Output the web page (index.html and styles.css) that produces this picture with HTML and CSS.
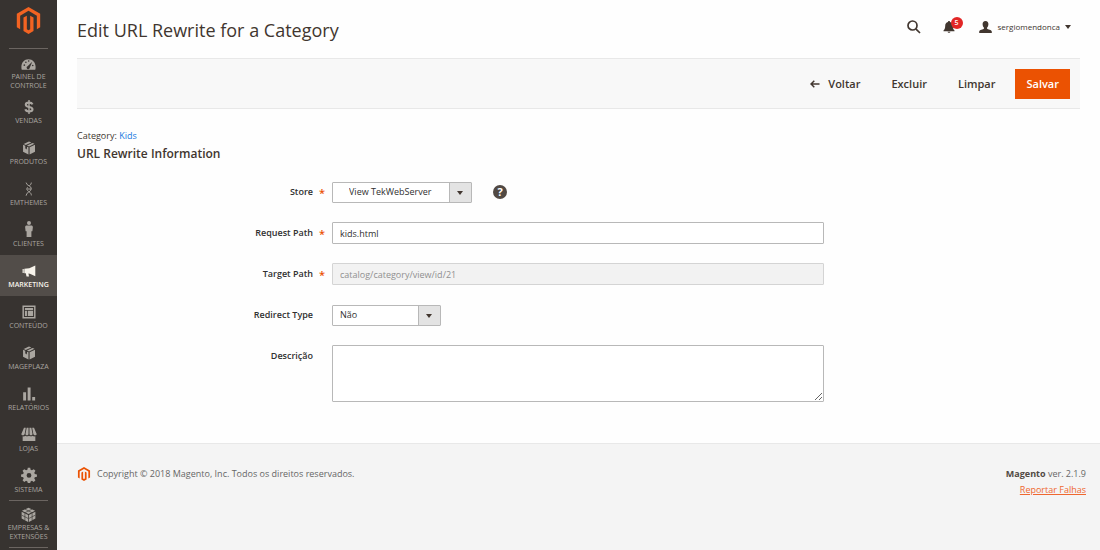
FILE: index.html
```html
<!DOCTYPE html>
<html lang="pt-BR">
<head>
<meta charset="utf-8">
<title>Edit URL Rewrite for a Category</title>
<link rel="stylesheet" href="styles.css">
</head>
<body>
<svg class="defs" aria-hidden="true">
  <symbol id="magento" viewBox="0 0 24 24"><path d="M12 24l-4.455-2.572v-12l2.97-1.715v12.001l1.485.902 1.485-.902V7.713l2.971 1.715v12L12 24zM22.391 6.003v12l-2.969 1.714V7.713L12 3.43 4.574 7.713v12.004l-2.970-1.714V6.003L12 0l10.391 6.003z"/></symbol>
  <symbol id="box" viewBox="0 0 24 24"><path d="M12 .8l4 1.600-9.600 4.300-3.600-1.600zM18 3.300l3.400 1.500-9.300 4.500-3.600-1.600zM1.800 6.600l3.800 1.700v5l1.600-.6 1.400 2.400V9.700l2.500 1.100V23L1.800 18.600zM22.300 6.600v12L13 23V10.800z"/></symbol>
</svg>
<div class="page">
  <aside class="sidebar">
    <a class="logo" href="#" aria-label="Magento Admin"><svg><use href="#magento"/></svg></a>
    <nav class="menu">
      <a class="item item-first" href="#">
        <svg viewBox="0 0 24 24"><path fill-rule="evenodd" d="M1.200 20.500C-1.200 11 4 3.500 12 3.500S25.200 11 22.800 20.500zM4 13a1.300 1.300 0 1 0 2.600 0a1.300 1.300 0 1 0-2.600 0zM6.500 8.300a1.300 1.300 0 1 0 2.600 0a1.300 1.300 0 1 0-2.600 0zM11 6.300a1.300 1.300 0 1 0 2.600 0a1.300 1.300 0 1 0-2.600 0zM17.500 13.500a1.300 1.300 0 1 0 2.600 0a1.300 1.300 0 1 0-2.600 0zM18 7.500l-7.500 7.300a2.500 2.500 0 1 0 3.500 2.500z"/></svg>
        <span>PAINEL DE CONTROLE</span></a>
      <a class="item" href="#">
        <svg viewBox="0 0 24 24"><path class="line" stroke-width="3.600" d="M18 7.500C17 5 14.500 4.500 12 4.500c-3 0-5.500 1-5.500 3.700 0 5.300 11.500 2.300 11.500 7.800 0 2.700-3 3.700-6 3.700s-5.500-1-6.200-3.700"/><path d="M10.800 0h2.400v24h-2.400z"/></svg>
        <span>VENDAS</span></a>
      <a class="item" href="#"><svg><use href="#box"/></svg><span>PRODUTOS</span></a>
      <a class="item" href="#">
        <svg viewBox="0 0 24 24"><path class="line" stroke-width="1.700" d="M7 1c1 6 9 5 9 10.500S7 17 7 23.500M16 1c-.5 4-2 4-3.500 5.500M9.500 9c-3 4 0 6 3 8 2 1.300 3.500 3 3.500 6M9 12h6.500"/></svg>
        <span>EMTHEMES</span></a>
      <a class="item" href="#">
        <svg class="large" viewBox="0 0 24 24"><circle cx="12" cy="3" r="3"/><path d="M8.700 6.800h6.600c1.700 0 2.500 1 2.500 2.500l-.7 6.200h-1.500V24H8.400v-8.500H6.900l-.7-6.200c0-1.500.8-2.500 2.500-2.500z"/></svg>
        <span>CLIENTES</span></a>
      <a class="item item-active" href="#">
        <svg viewBox="0 0 24 24"><path d="M1 8.500h2v7H1zM4 8l8.500-.7L22.800 2.500v18.300l-9.300-4.300-2.500-.2 1 5.200H7.800L6.500 16 4 15.700z"/></svg>
        <span>MARKETING</span></a>
      <a class="item" href="#">
        <svg viewBox="0 0 24 24"><path fill-rule="evenodd" d="M.8 1h22.400v22H.8zM3.300 3.500v17h17.400v-17z"/><path d="M5 5h14v3.500H5zM5 10h3.500v9H5zM10 10h9v9h-9z"/></svg>
        <span>CONTEÚDO</span></a>
      <a class="item" href="#"><svg><use href="#box"/></svg><span>MAGEPLAZA</span></a>
      <a class="item" href="#">
        <svg viewBox="0 0 24 24"><path d="M2 9h5v14H2zM9.700 1h5v22h-5zM17.500 17h5v6h-5z"/></svg>
        <span>RELATÓRIOS</span></a>
      <a class="item" href="#">
        <svg class="large" viewBox="0 0 24 24"><path d="M4.500 2.500h2.700L5.500 12c-.5 2.500-5 2.500-5 0zM8.500 2.500h2.800V12c0 2.500-4.600 2.500-4.600 0zM12.700 2.500h2.800L17.300 12c0 2.500-4.600 2.500-4.600 0zM16.800 2.500h2.700l4 9.500c0 2.500-4.500 2.500-5 0zM2.500 15.500c2 .4 3 0 4-1 1.500 1.300 3.500 1.300 5.500 0 2 1.300 4 1.300 5.500 0 1 1 2 1.400 4 1v7h-19z"/></svg>
        <span>LOJAS</span></a>
      <a class="item item-system" href="#">
        <svg class="large" viewBox="0 0 24 24"><path fill-rule="evenodd" d="M10.200 1h3.600l.6 3.200 2 .8 2.700-1.800 2.600 2.600L19.900 8.500l.8 2 3.200.6v3.600l-3.200.6-.8 2 1.800 2.700-2.600 2.600-2.700-1.800-2 .8-.6 2.400h-3.600l-.6-2.400-2-.8-2.700 1.800-2.600-2.600 1.800-2.700-.8-2-3.200-.6v-3.600l3.200-.6.8-2-1.800-2.700 2.600-2.600L7.600 5l2-.8zM12 9a3.600 3.600 0 1 0 0 7.200A3.600 3.600 0 1 0 12 9z"/></svg>
        <span>SISTEMA</span></a>
      <a class="item item-partners" href="#">
        <svg viewBox="0 0 24 24"><path d="M12 1.200L22.500 6 12 11.300 1.500 6zM1 7.500l10.400 5.200V24L1 18.500zM23 7.500v11L12.600 24V12.700z"/><path class="cut" d="M6.500 3.500L17.500 9M17.500 3.500L6.500 9M6.200 10v11M1 13l10.400 5.300M17.800 10v11M23 13l-10.400 5.300"/></svg>
        <span>EMPRESAS &amp; EXTENSÕES</span></a>
    </nav>
  </aside>
  <div class="wrapper">
    <header class="header">
      <h1 class="title">Edit URL Rewrite for a Category</h1>
      <div class="tools">
        <button class="tool" type="button" aria-label="Search"><svg class="ico-search" viewBox="0 0 14 14"><circle cx="5.500" cy="5.500" r="4.500"/><path d="M8.800 8.800L13 13"/></svg></button>
        <button class="tool bell" type="button" aria-label="Notifications"><svg class="ico-bell" viewBox="0 0 12 12"><path d="M6 0c.8 0 1 .5 1 1 2 .5 2.800 2 2.800 4 0 2.500.7 3.500 1.700 4.500v.7H.5v-.7C1.500 8.500 2.200 7.500 2.200 5c0-2 .8-3.500 2.800-4 0-.5.200-1 1-1zM4.600 10.700h2.800c-.2 1.300-2.600 1.300-2.800 0z"/></svg><span class="badge">5</span></button>
        <button class="tool user" type="button"><svg class="ico-user" viewBox="0 0 13 12"><path d="M6.500 0c2 0 3 1.300 2.900 3.200-.1 1.500-.5 2.500-1.300 3.300v1.300c.5.900 4.700.8 4.700 3V12H.2v-1.200c0-2.200 4.200-2.100 4.700-3V6.500C4.100 5.700 3.700 4.700 3.600 3.200 3.500 1.300 4.500 0 6.500 0z"/></svg><span>sergiomendonca</span><i class="caret"></i></button>
      </div>
    </header>
    <main class="content">
      <div class="actions">
        <button class="action" type="button"><svg class="ico-back" viewBox="0 0 10 8"><path d="M9.500 4H1M4.300.7L1 4l3.300 3.300"/></svg>Voltar</button>
        <button class="action" type="button">Excluir</button>
        <button class="action" type="button">Limpar</button>
        <button class="action primary" type="submit" form="rewrite">Salvar</button>
      </div>
      <p class="category">Category: <a href="#">Kids</a></p>
      <h2 class="legend">URL Rewrite Information</h2>
      <form class="form" id="rewrite">
        <div class="field required">
          <label for="store">Store</label>
          <div class="control">
            <span class="select"><select id="store" class="store"><option>View TekWebServer</option></select></span>
            <button class="help" type="button" aria-label="Help">?</button>
          </div>
        </div>
        <div class="field required">
          <label for="request">Request Path</label>
          <div class="control"><input class="text" id="request" type="text" value="kids.html"></div>
        </div>
        <div class="field required">
          <label for="target">Target Path</label>
          <div class="control"><input class="text" id="target" type="text" value="catalog/category/view/id/21" disabled></div>
        </div>
        <div class="field">
          <label for="redirect">Redirect Type</label>
          <div class="control"><span class="select"><select id="redirect" class="redirect"><option>Não</option></select></span></div>
        </div>
        <div class="field">
          <label for="description">Descrição</label>
          <div class="control"><textarea class="text area" id="description"></textarea></div>
        </div>
      </form>
    </main>
    <footer class="footer">
      <p class="copyright"><svg><use href="#magento"/></svg>Copyright © 2018 Magento, Inc. Todos os direitos reservados.</p>
      <div class="version"><p><strong>Magento</strong> ver. 2.1.9</p><a href="#">Reportar Falhas</a></div>
    </footer>
  </div>
</div>
</body>
</html>
```
FILE: styles.css
```css
* { box-sizing: border-box; }
body {
  margin: 0;
  background: #fefefe;
  color: #41362f;
  font: 9px/14px "Open Sans", "Noto Sans", sans-serif;
}
h1, h2, p { margin: 0; }
button, input, select, textarea { font: inherit; color: inherit; }
button { padding: 0; border: 0; background: none; }
.defs { display: none; }
.page { display: flex; min-height: 100vh; }

.sidebar {
  flex: 0 0 57px;
  height: 100vh;
  overflow: hidden;
  background: #373330;
}
.logo {
  display: flex;
  justify-content: center;
  height: 49px;
  margin: 0 9px;
  padding-top: 7px;
  border-bottom: 1px solid #6b6561;
}
.logo svg { width: 27px; height: 27px; fill: #f26322; }
.item {
  display: flex;
  flex-direction: column;
  align-items: center;
  gap: 2px;
  height: 41px;
  padding-top: 9px;
  color: #aaa6a0;
  font-size: 7px;
  line-height: 9px;
  text-align: center;
  text-decoration: none;
}
.item svg { flex: none; width: 14px; height: 14px; fill: currentColor; }
.item .large { width: 16px; height: 16px; margin: -2px 0 0; }
.item .line { fill: none; stroke: currentColor; }
.item .cut { fill: none; stroke: #373330; stroke-width: 1; }
.item-first { height: 42px; padding-top: 8px; gap: 0; }
.item-first svg { width: 15px; height: 15px; }
.item-active { background: #524d49; color: #f7f3eb; font-weight: 600; }
.item-system { margin: 0 9px; border-bottom: 1px solid #6b6561; }
.item-partners {
  height: 47px;
  margin: 0 9px;
  padding-top: 6px;
  gap: 1px;
  border-bottom: 1px solid #6b6561;
}
.item-partners svg { width: 15px; height: 15px; }
.item-partners span { margin: 0 -4px; }

.wrapper { flex: 1; display: flex; flex-direction: column; min-width: 0; }
.header {
  display: flex;
  justify-content: space-between;
  align-items: center;
  height: 58px;
  padding: 0 29px 4px 20px;
}
.title { font-size: 18px; line-height: 26px; font-weight: 400; padding-top: 6px; }
.tools { display: flex; align-items: center; gap: 22px; }
.tool { display: flex; align-items: center; }
.tool svg { fill: currentColor; }
.tool .ico-search { width: 14px; height: 14px; fill: none; stroke: currentColor; stroke-width: 1.700; }
.ico-bell { width: 12px; height: 12px; }
.bell { position: relative; margin-right: 2px; }
.badge {
  position: absolute;
  left: 8px;
  top: -4px;
  width: 12px;
  height: 12px;
  border-radius: 50%;
  background: #e22626;
  color: #fff;
  font-size: 7px;
  line-height: 12px;
  font-weight: 600;
}
.ico-user { width: 13px; height: 12px; margin-right: 6px; }
.user { font-size: 8px; }
.caret {
  margin-left: 5px;
  border: 3px solid transparent;
  border-top: 4px solid currentColor;
  border-bottom: 0;
}

.content { padding: 0 20px 41px; }
.actions {
  display: flex;
  justify-content: flex-end;
  align-items: center;
  gap: 9px;
  height: 51px;
  padding: 0 10px;
  background: #f8f8f8;
  border: solid #e8e8e8;
  border-width: 1px 0;
}
.action {
  display: flex;
  align-items: center;
  height: 30px;
  padding: 0 11px;
  font-size: 11px;
  font-weight: 600;
}
.ico-back { width: 10px; height: 8px; margin-right: 8px; fill: none; stroke: currentColor; stroke-width: 1.500; }
.primary { background: #eb5202; color: #fff; }
.category { margin-top: 20px; }
.category a { color: #1979e0; text-decoration: none; }
.legend { margin-top: 3px; font-size: 12px; line-height: 16px; font-weight: 600; }

.form { display: grid; gap: 19px; margin-top: 19px; color: #303030; }
.field { display: grid; grid-template-columns: 255fr 492fr 256fr; }
.field label {
  position: relative;
  padding-right: 19px;
  line-height: 22px;
  font-weight: 600;
  text-align: right;
}
.required label::after {
  content: "*";
  position: absolute;
  right: 7px;
  top: 1px;
  color: #eb5202;
  font-size: 11px;
}
.control { display: flex; align-items: center; min-width: 0; }
.text {
  display: block;
  width: 100%;
  height: 22px;
  padding: 0 7px;
  border: 1px solid #b8b8b8;
  border-radius: 1px;
  background: #fff;
}
.text:disabled { background: #f2f2f2; border-color: #d4d4d4; color: #909090; }
.area { height: 57px; resize: vertical; }
.select { position: relative; display: flex; height: 21px; }
.select select {
  appearance: none;
  padding: 0 28px 0 7px;
  border: 1px solid #b8b8b8;
  border-radius: 1px;
  background: linear-gradient(#e3e3e3, #e3e3e3) right / 21px 100% no-repeat,
    linear-gradient(#b8b8b8, #b8b8b8) right / 22px 100% no-repeat, #fff;
}
.select .store { width: 140px; padding-left: 16px; }
.select .redirect { width: 109px; }
.select::after {
  content: "";
  position: absolute;
  right: 9px;
  top: 9px;
  border: 3px solid transparent;
  border-top: 4px solid #41362f;
  border-bottom: 0;
  pointer-events: none;
}
.help {
  width: 14px;
  height: 14px;
  margin-left: 21px;
  border-radius: 50%;
  background: #514943;
  color: #fff;
  font-size: 11px;
  line-height: 14px;
  font-weight: 700;
}

.footer {
  flex: 1;
  display: flex;
  justify-content: space-between;
  align-items: flex-start;
  padding: 22px 14px 20px 20px;
  border-top: 1px solid #e8e8e8;
  background: #f4f4f4;
  color: #666;
  line-height: 16px;
}
.copyright { display: flex; align-items: center; gap: 6px; }
.copyright svg { width: 14px; height: 16px; fill: #eb5202; }
.version { text-align: right; }
.version strong { color: #514943; font-weight: 700; }
.version a { color: #ef672f; text-decoration: underline; }
```
